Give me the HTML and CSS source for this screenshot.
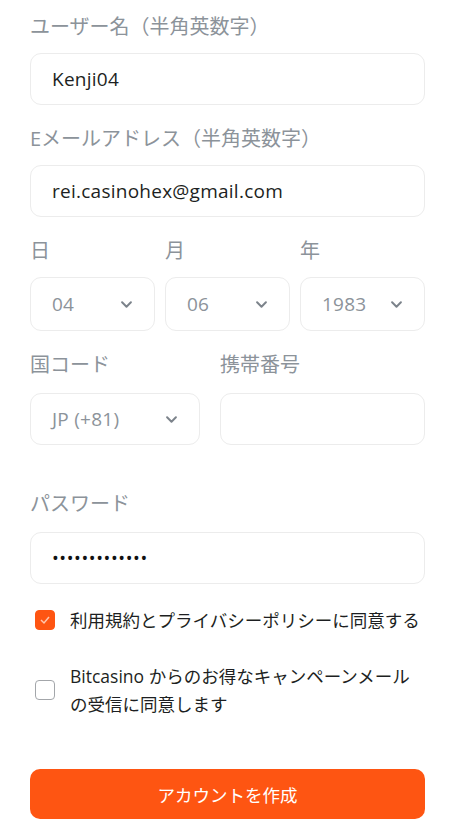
FILE: index.html
```html
<!DOCTYPE html>
<html lang="ja">
<head>
  <meta charset="UTF-8" />
  <meta name="viewport" content="width=device-width, initial-scale=1.0"/>
  <title>アカウント作成</title>
  <link rel="stylesheet" href="styles.css">
</head>
<body>

  <form class="signup">
    <div class="field">
      <label class="label">ユーザー名（半角英数字）</label>
      <div class="box">Kenji04</div>
    </div>

    <div class="field">
      <label class="label">Eメールアドレス（半角英数字）</label>
      <div class="box">rei.casinohex@gmail.com</div>
    </div>

    <div class="field row three">
      <div>
        <label class="label">日</label>
        <div class="box select">04
          <svg class="chev" viewBox="0 0 10 6"><path d="M1 1l4 4 4-4"/></svg>
        </div>
      </div>
      <div>
        <label class="label">月</label>
        <div class="box select">06
          <svg class="chev" viewBox="0 0 10 6"><path d="M1 1l4 4 4-4"/></svg>
        </div>
      </div>
      <div>
        <label class="label">年</label>
        <div class="box select">1983
          <svg class="chev" viewBox="0 0 10 6"><path d="M1 1l4 4 4-4"/></svg>
        </div>
      </div>
    </div>

    <div class="field row phone">
      <div>
        <label class="label">国コード</label>
        <div class="box select">JP (+81)
          <svg class="chev" viewBox="0 0 10 6"><path d="M1 1l4 4 4-4"/></svg>
        </div>
      </div>
      <div>
        <label class="label">携帯番号</label>
        <div class="box"></div>
      </div>
    </div>

    <div class="field pass">
      <label class="label">パスワード</label>
      <div class="box dots">•••••••••••••</div>
    </div>

    <div class="check first">
      <span class="tick on">
        <svg viewBox="0 0 20 20"><path d="M6 10l3 3 5-6"/></svg>
      </span>
      <span>利用規約とプライバシーポリシーに同意する</span>
    </div>

    <div class="check">
      <span class="tick"></span>
      <span>Bitcasino からのお得なキャンペーンメール<br>の受信に同意します</span>
    </div>

    <button type="button" class="submit">アカウントを作成</button>
  </form>

</body>
</html>
```

FILE: styles.css
```css
body {
  margin: 0;
  background: #fff;
  font-family: "Open Sans", "Noto Sans CJK JP", sans-serif;
  color: #1d1f22;
}

.signup {
  padding: 15px 39px 0 30px;
}

.field {
  margin-bottom: 22px;
}

.label {
  display: block;
  font-size: 20px;
  line-height: 24px;
  color: #8c939a;
  margin-bottom: 14px;
}

.box {
  box-sizing: border-box;
  height: 52px;
  border: 1px solid #ececec;
  border-radius: 11px;
  padding: 0 21px;
  display: flex;
  align-items: center;
  font-size: 19px;
  letter-spacing: 0.25px;
  color: #1d1f22;
}

.select {
  justify-content: space-between;
  color: #8c939a;
  padding-right: 22px;
}

.chev {
  width: 11px;
  height: 7px;
  fill: none;
  stroke: #7c838b;
  stroke-width: 1.8;
  stroke-linecap: round;
  stroke-linejoin: round;
}

.row {
  display: grid;
}

.three {
  grid-template-columns: 1fr 1fr 1fr;
  gap: 10px;
}

.three .box {
  height: 54px;
}

.phone {
  grid-template-columns: 170px 1fr;
  gap: 20px;
}

.phone .label {
  margin-bottom: 16px;
}

.pass {
  margin-top: 47px;
  margin-bottom: 22px;
}

.pass .label {
  margin-bottom: 16px;
}

.dots {
  font-size: 18px;
  letter-spacing: 0.6px;
  color: #111;
}

.check {
  display: flex;
  align-items: center;
  gap: 15px;
  padding-left: 5px;
  font-size: 17.5px;
  line-height: 28px;
  margin-bottom: 28px;
}

.tick {
  flex: none;
  box-sizing: border-box;
  width: 20px;
  height: 20px;
  border: 1.5px solid #a3a6aa;
  border-radius: 4px;
}

.tick.on {
  background: #fe5512;
  border-color: #fe5512;
}

.tick svg {
  display: block;
  width: 20px;
  height: 20px;
  margin: -1.5px;
  fill: none;
  stroke: #ffc6ae;
  stroke-width: 1.5;
}

.submit {
  display: block;
  width: 100%;
  height: 50px;
  margin-top: 51px;
  border: none;
  border-radius: 10px;
  background: #fe5512;
  color: #fff;
  font-family: inherit;
  font-size: 17.5px;
}
```
